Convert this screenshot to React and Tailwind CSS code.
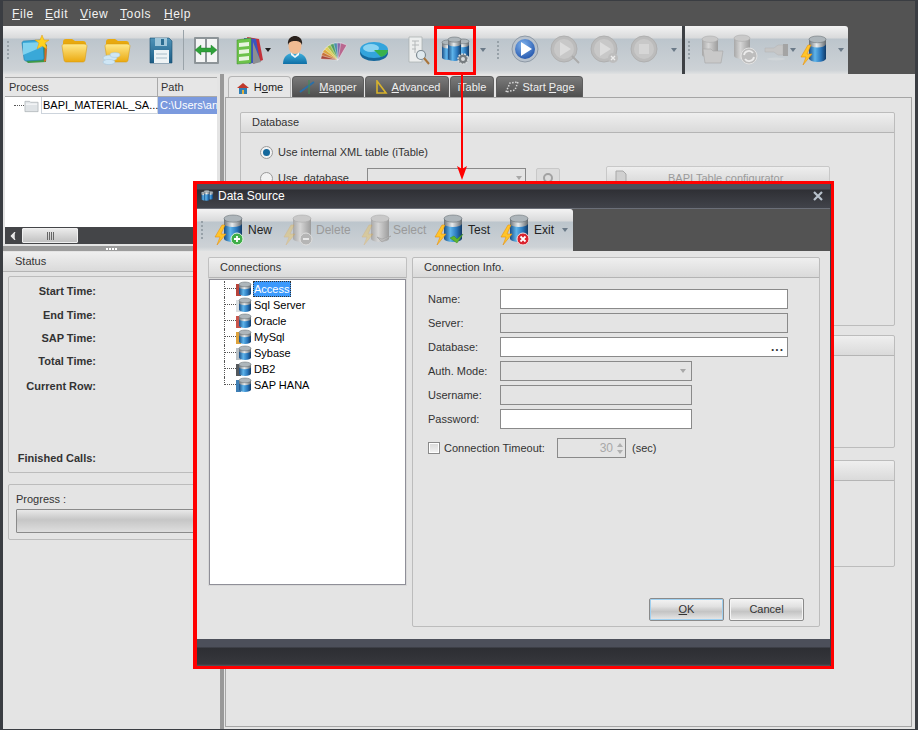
import { ChevronLeft } from "lucide-react";

// Shared gradients for the hand drawn toolbar icons.
function Defs() {
  return (
    <svg className="absolute h-0 w-0" aria-hidden="true">
      <defs>
        <linearGradient id="canBlue" x1="0" x2="1" y1="0" y2="0">
          <stop offset="0" stopColor="#1c4f86" />
          <stop offset="0.35" stopColor="#5fb4ea" />
          <stop offset="0.7" stopColor="#2a78bd" />
          <stop offset="1" stopColor="#123a66" />
        </linearGradient>
        <linearGradient id="canGray" x1="0" x2="1" y1="0" y2="0">
          <stop offset="0" stopColor="#a8a8a8" />
          <stop offset="0.4" stopColor="#d6d6d6" />
          <stop offset="1" stopColor="#9c9c9c" />
        </linearGradient>
        <linearGradient id="canTop" x1="0" x2="1" y1="0" y2="0">
          <stop offset="0" stopColor="#6d7378" />
          <stop offset="0.45" stopColor="#e8ecee" />
          <stop offset="1" stopColor="#62686d" />
        </linearGradient>
        <linearGradient id="folderY" x1="0" x2="0" y1="0" y2="1">
          <stop offset="0" stopColor="#ffe98a" />
          <stop offset="1" stopColor="#eba90f" />
        </linearGradient>
        <linearGradient id="floppy" x1="0" x2="0" y1="0" y2="1">
          <stop offset="0" stopColor="#4f93b8" />
          <stop offset="1" stopColor="#1c5d86" />
        </linearGradient>
        <radialGradient id="playBlue" cx="0.4" cy="0.3" r="0.8">
          <stop offset="0" stopColor="#7fb2ec" />
          <stop offset="1" stopColor="#1d4fa8" />
        </radialGradient>
        <linearGradient id="torso" x1="0" x2="0" y1="0" y2="1">
          <stop offset="0" stopColor="#3fb0dd" />
          <stop offset="1" stopColor="#0f6fa6" />
        </linearGradient>
      </defs>
    </svg>
  );
}

function Can({ x = 0, y = 0, w = 16, h = 22, gray = false }) {
  const ry = w * 0.2;
  return (
    <g>
      <path d={`M${x} ${y + ry}v${h - ry * 2}a${w / 2} ${ry} 0 0 0 ${w} 0v-${h - ry * 2}z`} fill={gray ? "url(#canGray)" : "url(#canBlue)"} />
      <path d={`M${x} ${y + ry}v${h * 0.18}a${w / 2} ${ry} 0 0 0 ${w} 0v-${h * 0.18}z`} fill={gray ? "url(#canGray)" : "url(#canTop)"} />
      <ellipse cx={x + w / 2} cy={y + ry} rx={w / 2} ry={ry} fill={gray ? "#c9c9c9" : "#aeb6bb"} stroke={gray ? "#a6a6a6" : "#5f666b"} strokeWidth="0.5" />
    </g>
  );
}

function Icon({ children, w = 32 }) {
  return <svg viewBox={`0 0 ${w} 32`} width={w} height="32" className="shrink-0">{children}</svg>;
}

function StarFolder() {
  return (
    <Icon>
      <path d="M6 10l18-2 4 3-1 17-18 1-3-3z" fill="#3f9a45" />
      <path d="M26 11l2 1-1 15-2 1z" fill="#d9662a" />
      <path d="M3 9c0-1 1-2 2-2l17-1c1 0 2 1 2 2l1 16c0 1-1 2-2 2l-16 1c-1 0-2-1-2-2z" fill="#39a8d8" stroke="#1d7ba8" strokeWidth="0.6" />
      <path d="M4 9l19-1 0 5-19 8z" fill="#7fd2ef" />
      <path d="M23 1l2 5 5 0-4 3 2 6-5-3-5 3 2-6-4-3 5 0z" fill="#ffd21f" stroke="#e09b10" strokeWidth="0.5" />
    </Icon>
  );
}

function FolderIcon({ cloud }) {
  return (
    <Icon>
      <path d="M5 8c0-2 1-3 3-3h6l3 2h8c2 0 3 1 3 3l-1 6H5z" fill="#e8a90f" />
      <path d="M4 12c0-1 1-2 2-2h20c2 0 3 1 3 2l-2 14c0 1-1 2-2 2H8c-1 0-2-1-2-2z" fill="url(#folderY)" stroke="#d49708" strokeWidth="0.5" />
      {cloud && (
        <g fill="#cfe6f5" stroke="#9fc3dc" strokeWidth="0.5">
          <ellipse cx="9" cy="24" rx="7" ry="3" />
          <ellipse cx="8" cy="28" rx="6" ry="2.6" />
          <ellipse cx="14" cy="21" rx="5" ry="2.4" />
        </g>
      )}
    </Icon>
  );
}

function FloppyIcon() {
  return (
    <Icon>
      <path d="M6 4h19l3 3v22H6z" fill="url(#floppy)" stroke="#174e70" strokeWidth="0.6" />
      <rect x="11" y="4" width="12" height="8" fill="#9fc6da" />
      <rect x="17" y="5" width="3" height="6" fill="#2c6d92" />
      <rect x="10" y="16" width="15" height="13" fill="#eef3f5" />
      <path d="M12 20h11M12 24h11" stroke="#a8bcc8" strokeWidth="1" />
    </Icon>
  );
}

function MapperIcon() {
  return (
    <Icon>
      <rect x="4" y="3" width="25" height="27" rx="1" fill="#8d9498" />
      <rect x="6" y="5" width="9" height="23" fill="#f4f5f5" />
      <rect x="17" y="5" width="10" height="23" fill="#f4f5f5" />
      <path d="M5 16l6-5v3h10v-3l6 5-6 5v-3H11v3z" fill="#2fa13a" stroke="#1c7a27" strokeWidth="0.4" />
    </Icon>
  );
}

function BooksIcon() {
  return (
    <Icon>
      <path d="M14 3l12 2 4 21-10 4z" fill="#c3313a" />
      <path d="M11 4l12 1 4 22-11 3z" fill="#3a55c0" />
      <path d="M20 8l8 20-8 2z" fill="#8b8f92" />
      <path d="M4 6l14-2v25L4 30z" fill="#6cc24a" stroke="#3d8f2a" strokeWidth="0.5" />
      <path d="M6 9l10-1v4L6 13zM6 16l10-1v4L6 20zM6 23l10-1v4L6 27z" fill="#e8f5e0" />
    </Icon>
  );
}

function UserIcon() {
  return (
    <Icon>
      <path d="M4 30c0-8 5-11 12-11s12 3 12 11z" fill="url(#torso)" />
      <path d="M12 18l4 4 4-4v3l-4 3-4-3z" fill="#f0f5f7" />
      <ellipse cx="16" cy="12" rx="6.5" ry="8" fill="#f0bb92" />
      <path d="M9 11c-1-7 4-9 7-9s8 2 7 9c-1-3-3-4-7-4s-6 1-7 4z" fill="#2a211c" />
    </Icon>
  );
}

function PaletteIcon() {
  const colors = ["#a8463a", "#c9743a", "#dba63c", "#e2cf5a", "#9fbe4a", "#4f9e62", "#4a8fae", "#8a6aa8", "#b8678f"];
  return (
    <Icon>
      {colors.map((c, i) => (
        <path key={c} d="M19 26l-3.2-17h6.4z" fill={c} transform={`rotate(${-76 + i * 12} 19 26)`} stroke="#f2f2f2" strokeWidth="0.4" />
      ))}
    </Icon>
  );
}

function PieIcon() {
  return (
    <Icon>
      <ellipse cx="16" cy="19" rx="14" ry="8" fill="#16689c" />
      <ellipse cx="16" cy="16" rx="14" ry="8" fill="#33a4dc" />
      <ellipse cx="13" cy="14" rx="8" ry="4" fill="#8ad3f2" />
      <path d="M16 16l14 0c0 3-3 6-7 7z" fill="#38b14a" />
    </Icon>
  );
}

function ReportIcon() {
  return (
    <Icon>
      <path d="M8 3h13v25H8z" fill="#eceeee" stroke="#a8acae" strokeWidth="0.7" />
      <path d="M11 7h7M11 11h7M11 15h4M14 7v12" stroke="#b4b8ba" strokeWidth="1" />
      <circle cx="20" cy="21" r="4.5" fill="#dfe9ee" stroke="#7d8a92" strokeWidth="1.2" />
      <path d="M23 24l5 6" stroke="#a8743a" strokeWidth="2" />
    </Icon>
  );
}

function DbGroupIcon({ small }) {
  return (
    <svg viewBox="0 0 32 32" width={small ? 14 : 32} height={small ? 14 : 32} className="shrink-0">
      <Can x={3} y={6} w={12} h={20} />
      <Can x={18} y={5} w={12} h={19} />
      <Can x={9} y={3} w={13} h={24} />
      {!small && <circle cx="24" cy="25" r="5" fill="#767c80" stroke="#d8dcde" strokeWidth="1.5" strokeDasharray="2 1" />}
      {!small && <circle cx="24" cy="25" r="2" fill="#d8dcde" />}
    </svg>
  );
}

function PlayIcon({ overlay, off }) {
  const ring = off ? "#bcbcbc" : "#b9c2cc";
  return (
    <Icon>
      <circle cx="15" cy="15" r="13" fill={ring} stroke={off ? "#b0b0b0" : "#8f9aa6"} strokeWidth="1" />
      <circle cx="15" cy="15" r="10" fill={off ? "#c8c8c8" : "url(#playBlue)"} />
      {overlay === "stop" ? <rect x="10" y="10" width="10" height="10" fill="#d6d6d6" /> : <path d="M11 8l11 7-11 7z" fill={off ? "#dcdcdc" : "#ffffff"} />}
      {overlay === "search" && <path d="M23 22l7 7" stroke="#ababab" strokeWidth="2" />}
      {overlay === "x" && (
        <g>
          <circle cx="24" cy="24" r="5" fill="#bdbdbd" />
          <path d="M22 22l4 4M26 22l-4 4" stroke="#ededed" strokeWidth="1.4" />
        </g>
      )}
    </Icon>
  );
}

function OffFolderIcon() {
  return (
    <Icon>
      <Can x={6} y={2} w={16} h={22} gray />
      <path d="M7 15h8l2 2h10l-2 12H9z" fill="#c9c9c9" stroke="#a6a6a6" strokeWidth="0.6" />
    </Icon>
  );
}

function OffRefreshIcon() {
  return (
    <Icon>
      <Can x={5} y={1} w={16} h={24} gray />
      <circle cx="20" cy="22" r="8" fill="#bdbdbd" stroke="#e2e2e2" strokeWidth="1" />
      <path d="M15 21a5 5 0 0 1 9-2M25 23a5 5 0 0 1-9 2" fill="none" stroke="#ededed" strokeWidth="1.8" />
    </Icon>
  );
}

function PlugIcon() {
  return (
    <svg viewBox="0 0 26 32" width="26" height="32" className="shrink-0">
      <path d="M1 14h9l4-3h5v10h-5l-4-3H1z" fill="#c6c6c6" stroke="#b2b2b2" strokeWidth="0.5" />
      <rect x="19" y="10" width="5" height="12" fill="#a4a4a4" />
      <ellipse cx="12" cy="25" rx="9" ry="1.5" fill="#d0d5d8" />
    </svg>
  );
}

function Bolt() {
  return <path d="M9 11L2 23h5l-3 8 9-11H8l4-9z" fill="#ffc42a" stroke="#e8920f" strokeWidth="0.6" />;
}

function BoltCanIcon() {
  return (
    <Icon>
      <Can x={10} y={2} w={17} h={26} />
      <Bolt />
    </Icon>
  );
}

function ActionIcon({ badge, off }) {
  return (
    <svg viewBox="0 0 32 32" width="32" height="32" className="shrink-0">
      <Can x={11} y={1} w={18} h={27} gray={off} />
      <g opacity={off ? 0.3 : 1}><Bolt /></g>
      {badge === "plus" && (
        <g>
          <circle cx="24" cy="25" r="6" fill="#3fae49" stroke="#e8f5e8" />
          <path d="M21 25h6M24 22v6" stroke="#fff" strokeWidth="1.8" />
        </g>
      )}
      {badge === "minus" && (
        <g>
          <circle cx="24" cy="25" r="6" fill="#b5b5b5" stroke="#dfdfdf" />
          <path d="M21 25h6" stroke="#eee" strokeWidth="1.8" />
        </g>
      )}
      {badge === "select" && <path d="M17 23l5 5 9-6-9 3z" fill="#bcbcbc" stroke="#a0a0a0" strokeWidth="0.6" />}
      {badge === "check" && <path d="M17 24l4-2 3 3 6-5-6 9z" fill="#5fb52f" stroke="#3d8f1f" strokeWidth="0.5" />}
      {badge === "x" && (
        <g>
          <circle cx="24" cy="25" r="6" fill="#d9232e" stroke="#f8e0e0" />
          <path d="M21.5 22.5l5 5M26.5 22.5l-5 5" stroke="#fff" strokeWidth="1.8" />
        </g>
      )}
    </svg>
  );
}

function Caret({ className }) {
  return <div className={`h-0 w-0 shrink-0 border-x-[3px] border-t-[4px] border-x-transparent ${className}`} />;
}

function Grip({ className = "" }) {
  return (
    <div className={`flex w-1 shrink-0 flex-col items-center gap-[2px] ${className}`}>
      {[0, 1, 2, 3, 4].map((i) => <div key={i} className="h-[2px] w-[2px] bg-[#97a1a8]" />)}
    </div>
  );
}

const barBg = "bg-[linear-gradient(#f3f3f3_0px,#d9dadb_12px,#bcc5cc_13px,#cdd2d6_44px,#dfe1e2_48px)]";

function MainToolbar() {
  return (
    <div className={`flex h-[48px] w-[845px] items-center rounded-tr-[3px] ${barBg}`}>
      <Grip className="ml-[3px]" />
      <div className="ml-[9px]"><StarFolder /></div>
      <div className="ml-[7px]"><FolderIcon /></div>
      <div className="ml-[11px]"><FolderIcon cloud /></div>
      <div className="ml-[11px]"><FloppyIcon /></div>
      <div className="ml-[7px] h-[40px] w-px bg-[#9aa3a9]" />
      <div className="ml-[6px]"><MapperIcon /></div>
      <div className="ml-[11px]"><BooksIcon /></div>
      <Caret className="border-t-[#222]" />
      <div className="ml-[8px]"><UserIcon /></div>
      <div className="ml-[8px]"><PaletteIcon /></div>
      <div className="ml-[7px]"><PieIcon /></div>
      <div className="ml-[11px]"><ReportIcon /></div>
      <div className="ml-[6px]"><DbGroupIcon /></div>
      <Caret className="ml-[9px] border-t-[#6b7a88]" />
      <Grip className="ml-[10px]" />
      <div className="ml-[10px]"><PlayIcon /></div>
      <div className="ml-[7px]"><PlayIcon off overlay="search" /></div>
      <div className="ml-[8px]"><PlayIcon off overlay="x" /></div>
      <div className="ml-[8px]"><PlayIcon off overlay="stop" /></div>
      <Caret className="ml-[10px] border-t-[#6b7a88]" />
      <div className="ml-[5px] h-full w-[3px] shrink-0 bg-[#3d4044]" />
      <Grip className="ml-[2px]" />
      <div className="ml-[5px]"><OffFolderIcon /></div>
      <div className="ml-px"><OffRefreshIcon /></div>
      <div className="ml-[3px]"><PlugIcon /></div>
      <Caret className="border-t-[#6b7a88]" />
      <div className="ml-[3px]"><BoltCanIcon /></div>
      <Caret className="ml-[7px] border-t-[#6b7a88]" />
    </div>
  );
}

function Menu() {
  const items = [
    ["F", "ile", "ml-[9px] w-[33px]"],
    ["E", "dit", "w-[35px]"],
    ["V", "iew", "w-[40px]"],
    ["T", "ools", "w-[44px]"],
    ["H", "elp", "w-[40px]"],
  ];
  return (
    <div className="flex h-[25px] items-center text-[12px] tracking-[0.6px] text-[#f2f2f2]">
      {items.map(([a, b, cls]) => (
        <span key={a} className={cls}><u>{a}</u>{b}</span>
      ))}
    </div>
  );
}

function ProcessTree() {
  return (
    <div className="mx-[2px] mt-[3px] flex h-[150px] flex-col bg-white">
      <div className="flex h-[20px] border-y border-[#a9a9a9] bg-[#e6e6e6] text-[#333]">
        <div className="flex w-[153px] items-center border-r border-[#a9a9a9] pl-[4px]">Process</div>
        <div className="flex flex-1 items-center pl-[3px]">Path</div>
      </div>
      <div className="flex h-[17px]">
        <div className="flex w-[36px] shrink-0 items-center pl-[9px]">
          <div className="w-[10px] border-b border-dotted border-[#555]" />
          <svg viewBox="0 0 16 14" width="15" height="14" className="shrink-0">
            <path d="M1 2h5l1 1h8v10H1z" fill="#dfe3e6" stroke="#a5abaf" strokeWidth="0.7" />
            <path d="M2 5h12" stroke="#fff" />
          </svg>
        </div>
        <div className="flex w-[117px] items-center border-x border-b border-[#cdd4dc] pl-[1px] text-black">BAPI_MATERIAL_SA...</div>
        <div className="flex-1 overflow-hidden whitespace-nowrap bg-[#7b9ade] pl-[2px] leading-[17px] text-white">C:\Users\an</div>
      </div>
    </div>
  );
}

function HScroll() {
  return (
    <div className="mx-[2px] flex h-[17px] items-center bg-[#444548] pl-px">
      <ChevronLeft size={14} fill="#e8e8e8" className="w-[14px] shrink-0 text-[#e8e8e8]" />
      <div className="ml-[2px] flex h-[15px] w-[56px] items-center justify-center gap-px rounded-[1px] border border-[#f0f0f0] bg-[linear-gradient(#eaeaea,#c2c2c2)]">
        {[0, 1, 2, 3].map((i) => <div key={i} className="h-[8px] w-px bg-[#666]" />)}
      </div>
    </div>
  );
}

function GroupHeader({ children, className = "" }) {
  return (
    <div className={`flex h-[20px] shrink-0 items-center rounded-t-[2px] border-b border-[#b4b4b4] bg-[linear-gradient(#efefef,#dadada)] pl-[11px] text-[#333] ${className}`}>
      {children}
    </div>
  );
}

const statusRows = [
  ["Start Time:", "mt-[7px]"],
  ["End Time:", "mt-[9px]"],
  ["SAP Time:", "mt-[8px]"],
  ["Total Time:", "mt-[8px]"],
  ["Current Row:", "mt-[10px]"],
  ["Finished Calls:", "mt-[57px]"],
];

function LeftPane() {
  return (
    <div className="flex w-[216px] shrink-0 flex-col bg-[#e4e4e4]">
      <ProcessTree />
      <HScroll />
      <div className="mt-[2px] flex h-[5px] items-center justify-center gap-px bg-[#9c9c9c]">
        {[0, 1, 2, 3].map((i) => <div key={i} className="h-[2px] w-[2px] bg-white" />)}
      </div>
      <GroupHeader className="mt-px pl-[12px]">Status</GroupHeader>
      <div className="ml-[5px] mt-[4px] flex h-[197px] flex-col rounded-[2px] border border-[#bcbcbc]">
        {statusRows.map(([label, mt]) => (
          <div key={label} className={`w-[87px] text-right font-bold leading-[15px] text-[#333] ${mt}`}>{label}</div>
        ))}
      </div>
      <div className="ml-[5px] mt-[11px] h-[56px] rounded-[2px] border border-[#bcbcbc] pl-[7px] pt-[7px] text-[#333]">
        <div className="leading-[15px]">Progress :</div>
        <div className="mt-[2px] h-[24px] rounded-[1px] border border-[#8a8a8a] bg-[linear-gradient(#e8e8e8,#c6c6c6_45%,#dedede)]" />
      </div>
    </div>
  );
}

function TabIconHome() {
  return (
    <svg viewBox="0 0 14 14" width="14" height="14" className="shrink-0">
      <path d="M1 7l6-5 6 5z" fill="#c0392b" />
      <rect x="3" y="7" width="8" height="6" fill="#2f7fb5" />
      <rect x="6" y="9" width="2" height="4" fill="#e0b040" />
    </svg>
  );
}

function TabIconMapper() {
  return (
    <svg viewBox="0 0 16 16" width="16" height="16" className="shrink-0">
      <path d="M1 13L15 3" stroke="#2a6fa8" strokeWidth="2" />
      <path d="M10 1v14" stroke="#3f8f55" strokeWidth="1" />
    </svg>
  );
}

function TabIconTriangle() {
  return (
    <svg viewBox="0 0 14 14" width="14" height="14" className="shrink-0">
      <path d="M3 1l9 12H3z" fill="none" stroke="#d8b32c" strokeWidth="1.6" />
    </svg>
  );
}

function TabIconFlag() {
  return (
    <svg viewBox="0 0 14 12" width="14" height="12" className="shrink-0">
      <path d="M1 11L5 2l8-1-3 8z" fill="none" stroke="#d8d8d8" strokeWidth="1.5" strokeDasharray="1.5 1.5" />
    </svg>
  );
}

function Tab({ w, children, active, ml = "" }) {
  return (
    <div className={`flex h-[21px] items-center justify-center gap-[4px] rounded-t-[4px] border border-b-0 ${w} ${ml} ${active ? "h-[22px] border-[#b5b5b5] bg-[#e6e6e6] text-[#222]" : "border-[#5d5d5d] bg-[linear-gradient(#7a7a7a,#4e4e4e)] text-[#f0f0f0]"}`}>
      {children}
    </div>
  );
}

function Radio({ on }) {
  return (
    <div className="flex h-[13px] w-[13px] shrink-0 items-center justify-center rounded-full border border-[#9a9a9a] bg-[#f2f2f2]">
      {on && <div className="h-[7px] w-[7px] rounded-full bg-[#14689c]" />}
    </div>
  );
}

function PageGroup({ title, h, mt }) {
  return (
    <div className={`flex flex-col rounded-[2px] border border-[#bcbcbc] ${h} ${mt}`}>
      <GroupHeader>{title}</GroupHeader>
    </div>
  );
}

function RightPane() {
  return (
    <div className="flex min-w-0 flex-1 flex-col bg-[#e4e4e4] pr-[3px] pt-[2px]">
      <div className="flex h-[21px] gap-px pl-[3px]">
        <Tab w="w-[63px]" active><TabIconHome /><span>H<u>o</u>me</span></Tab>
        <Tab w="w-[72px]"><TabIconMapper /><span><u>M</u>apper</span></Tab>
        <Tab w="w-[84px]"><TabIconTriangle /><span><u>A</u>dvanced</span></Tab>
        <Tab w="w-[44px]"><span>iTable</span></Tab>
        <Tab w="w-[87px]" ml="ml-px"><TabIconFlag /><span>Start <u>P</u>age</span></Tab>
      </div>
      <div className="mb-[2px] flex flex-1 flex-col border border-[#a5a5a5] pl-[14px] pr-[16px] pt-[14px]">
        <div className="flex h-[214px] flex-col rounded-[2px] border border-[#bcbcbc]">
          <GroupHeader>Database</GroupHeader>
          <div className="mt-[12px] flex h-[15px] items-center gap-[5px] pl-[19px] text-[#333]">
            <Radio on />
            <span>Use internal XML table (iTable)</span>
          </div>
          <div className="mt-[6px] flex items-center pl-[19px] text-[#333]">
            <Radio />
            <span className="ml-[5px] w-[89px]">Use&nbsp; database</span>
            <div className="flex h-[20px] w-[159px] items-center justify-end border border-[#8a8a8a] pr-[3px]">
              <Caret className="border-t-[#a8a8a8]" />
            </div>
            <div className="ml-[10px] flex h-[20px] w-[24px] items-center justify-center rounded-[2px] border border-[#c8c8c8] bg-[#dcdcdc]">
              <svg viewBox="0 0 12 12" width="12" height="12">
                <circle cx="6" cy="6" r="4" fill="none" stroke="#a2a2a2" strokeWidth="2" />
              </svg>
            </div>
            <div className="ml-[46px] flex h-[24px] w-[224px] items-center rounded-[2px] border border-[#c8c8c8] bg-[linear-gradient(#eee,#d2d2d2)] pl-[8px] text-[#9a9a9a]">
              <svg viewBox="0 0 12 16" width="12" height="16" className="shrink-0">
                <path d="M1 1h7l3 3v11H1z" fill="#d0d0d0" stroke="#a8a8a8" />
              </svg>
              <span className="ml-[41px]">BAPI Table configurator</span>
            </div>
          </div>
        </div>
        <PageGroup title="" h="h-[113px]" mt="mt-[9px]" />
        <PageGroup title="" h="h-[107px]" mt="mt-[12px]" />
      </div>
    </div>
  );
}

const dialogActions = [
  { label: "New", badge: "plus", cls: "ml-[9px]", text: "ml-[3px] w-[34px]" },
  { label: "Delete", badge: "minus", off: true, cls: "", text: "ml-[2px] w-[44px]" },
  { label: "Select", badge: "select", off: true, cls: "", text: "ml-px w-[40px]" },
  { label: "Test", badge: "check", cls: "", text: "ml-[3px] w-[31px]" },
  { label: "Exit", badge: "x", cls: "", text: "ml-[3px] w-[24px]" },
];

function DialogToolbar() {
  return (
    <div className="h-[42px] shrink-0 bg-[#535353] text-[12px]">
      <div className="flex h-[42px] w-[376px] items-center rounded-tr-[3px] bg-[linear-gradient(#f3f3f3_0px,#d9dadb_12px,#bcc5cc_13px,#cdd2d6_38px,#dfe1e2_42px)]">
        <Grip className="ml-[3px]" />
        {dialogActions.map((a) => (
          <div key={a.label} className={`flex items-center ${a.cls}`}>
            <ActionIcon badge={a.badge} off={a.off} />
            <span className={`${a.text} ${a.off ? "text-[#9a9a9a]" : "text-[#222]"}`}>{a.label}</span>
          </div>
        ))}
        <Caret className="ml-[4px] border-t-[#6b7a88]" />
      </div>
    </div>
  );
}

const connections = [
  ["Access", "#b8433a"],
  ["Sql Server", "#d8dde0"],
  ["Oracle", "#c9544a"],
  ["MySql", "#dda23c"],
  ["Sybase", "#b9c0c5"],
  ["DB2", "#55595d"],
  ["SAP HANA", "#3f7fb5"],
];

function ConnectionRow({ name, tint, last, first }) {
  return (
    <div className="flex h-[16px] items-center">
      <div className={`h-[16px] w-[12px] shrink-0 ${last ? "" : "border-l border-dotted border-[#555]"}`}>
        <div className={`h-[8px] border-b border-dotted border-[#555] ${last ? "border-l" : ""}`} />
      </div>
      <svg viewBox="0 0 16 16" width="16" height="16" className="shrink-0">
        <rect x="0" y="3" width="5" height="12" fill={tint} />
        <Can x={3} y={1} w={12} h={14} />
      </svg>
      <span className={`ml-px leading-[14px] ${first ? "border border-dotted border-[#333] bg-[#3b99fc] pr-px text-white" : "pl-px text-black"}`}>{name}</span>
    </div>
  );
}

function Field({ label, w, off, children, mt = "mt-[4px]" }) {
  return (
    <div className={`flex items-center ${mt}`}>
      <div className="w-[72px] pt-px text-[#333]">{label}</div>
      <div className={`flex h-[20px] items-center justify-end border border-[#8a8a8a] pr-[3px] ${w} ${off ? "bg-[#e4e4e4]" : "bg-white"}`}>
        {children}
      </div>
    </div>
  );
}

function DialogButton({ children, focus }) {
  return (
    <div className={`flex h-[23px] w-[75px] items-center justify-center rounded-[2px] border text-[#333] bg-[linear-gradient(#f4f4f4,#e2e2e2_35%,#c4c4c4_60%,#e9e9e9)] ${focus ? "border-[#8a8a8a] shadow-[inset_0_0_0_1px_#9fd0f0]" : "border-[#8a8a8a] shadow-[inset_0_0_0_1px_#f4f4f4]"}`}>
      {children}
    </div>
  );
}

function DataSourceDialog() {
  return (
    <div className="absolute left-[193px] top-[181px] flex h-[488px] w-[641px] flex-col border-[3px] border-l-4 border-[#ff0000]">
      <div className="flex flex-1 flex-col border-r border-[#3a3d42] bg-[#e4e4e4]">
        <div className="flex h-[25px] shrink-0 items-center border-b border-[#6b6f78] bg-[linear-gradient(#4c4f5a_0px,#4c4f5a_5px,#2f3035_6px,#41434a)] pl-[3px] pr-[7px] text-[12px] text-white">
          <DbGroupIcon small />
          <span className="ml-[4px]">Data Source</span>
          <svg viewBox="0 0 10 10" width="10" height="10" className="ml-auto">
            <path d="M1 1l8 8M9 1l-8 8" stroke="#b8c2cc" strokeWidth="2.2" />
          </svg>
        </div>
        <DialogToolbar />
        <div className="flex min-h-0 flex-1 gap-[5px] pl-[11px] pr-[10px] pt-[6px]">
          <div className="flex h-[328px] w-[199px] shrink-0 flex-col rounded-t-[2px] border border-t-[#c0c0c0] border-x-[#c0c0c0] border-b-0">
            <GroupHeader className="pl-[10px]">Connections</GroupHeader>
            <div className="mt-px flex-1 border border-[#8f8f98] bg-white pl-[14px] pt-px shadow-[0_0_0_1px_#d8d8d8]">
              {connections.map(([name, tint], i) => (
                <ConnectionRow key={name} name={name} tint={tint} first={i === 0} last={i === connections.length - 1} />
              ))}
            </div>
          </div>
          <div className="flex h-[370px] flex-1 flex-col rounded-[2px] border border-[#bcbcbc]">
            <GroupHeader className="pl-[10px]">Connection Info.</GroupHeader>
            <div className="flex flex-1 flex-col pl-[15px] pt-[11px]">
              <Field label="Name:" w="w-[288px]" mt="mt-0" />
              <Field label="Server:" w="w-[288px]" off />
              <Field label="Database:" w="w-[288px]">
                <span className="text-[12px] font-bold leading-none tracking-[1px] text-[#333]">...</span>
              </Field>
              <Field label="Auth. Mode:" w="w-[192px]" off>
                <Caret className="mr-[2px] border-t-[#a8a8a8]" />
              </Field>
              <Field label="Username:" w="w-[192px]" off />
              <Field label="Password:" w="w-[192px]" />
              <div className="mt-[9px] flex items-center">
                <div className="h-[12px] w-[12px] border border-[#8a8a8a] bg-[linear-gradient(#d8d8d8,#f4f4f4)] shadow-[inset_0_0_0_1px_#fff]" />
                <span className="ml-[4px] w-[113px] text-[#333]">Connection Timeout:</span>
                <div className="flex h-[20px] w-[69px] items-center justify-end border border-[#8a8a8a] pr-[2px] text-[12px] text-[#a8a8a8]">
                  <span>30</span>
                  <div className="ml-[4px] flex flex-col gap-[3px]">
                    <Caret className="rotate-180 border-t-[#b0b0b0]" />
                    <Caret className="border-t-[#b0b0b0]" />
                  </div>
                </div>
                <span className="ml-[6px] text-[#333]">(sec)</span>
              </div>
              <div className="mt-auto flex justify-end gap-[5px] pb-[5px] pr-[15px]">
                <DialogButton focus><span><u>O</u>K</span></DialogButton>
                <DialogButton>Cancel</DialogButton>
              </div>
            </div>
          </div>
        </div>
        <div className="h-[27px] shrink-0 bg-[linear-gradient(#4c4f5a_0px,#4c4f5a_8px,#2d2e33_9px,#36373c_25px,#54565c)]" />
      </div>
    </div>
  );
}

// Red callout from the toolbar button down to the dialog
function Callout() {
  return (
    <>
      <div className="absolute left-[434px] top-[26px] h-[49px] w-[42px] border-[3px] border-[#ff0000]" />
      <svg className="absolute left-[456px] top-[74px]" width="12" height="108" viewBox="0 0 12 108">
        <path d="M6 0v98" stroke="#ff0000" strokeWidth="2" />
        <path d="M1 92l5 3 5-3-5 14z" fill="#ff0000" />
      </svg>
    </>
  );
}

export default function App() {
  return (
    <div className="relative h-[730px] w-[918px] overflow-hidden font-['Liberation_Sans',sans-serif] text-[11px]">
      <Defs />
      <div className="flex h-full flex-col border-x-[3px] border-y border-x-[#3a3d42] border-y-[#3a3d42] bg-[#535353]">
        <Menu />
        <div className="flex"><MainToolbar /></div>
        <div className="flex min-h-0 flex-1">
          <LeftPane />
          <div className="flex w-[6px] shrink-0 bg-[#e4e4e4]"><div className="ml-px w-[4px] bg-[#999]" /></div>
          <RightPane />
        </div>
      </div>
      <Callout />
      <DataSourceDialog />
    </div>
  );
}
